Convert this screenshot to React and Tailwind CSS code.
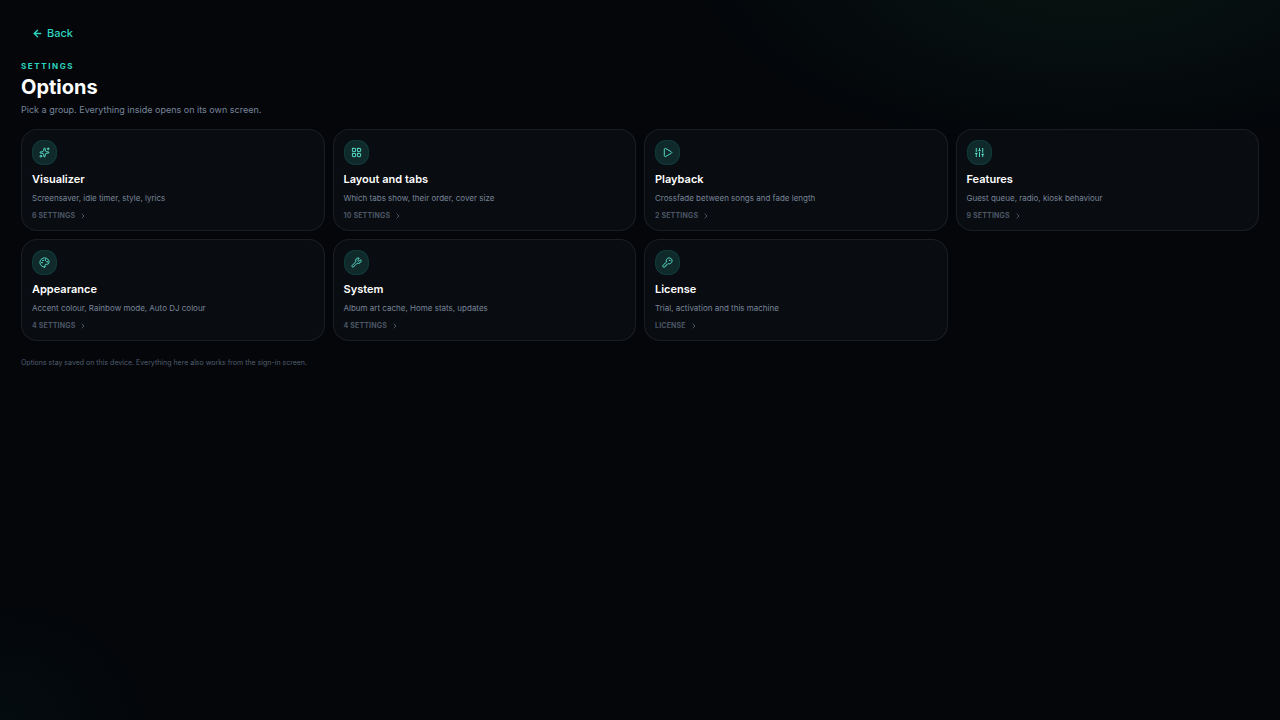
import React from "react";
import {
  ArrowLeft,
  ChevronRight,
  KeyRound,
  LayoutGrid,
  Palette,
  Play,
  SlidersVertical,
  Sparkles,
  Wrench,
} from "lucide-react";

const groups = [
  { title: "Visualizer", text: "Screensaver, idle timer, style, lyrics", count: "6 settings", icon: Sparkles },
  { title: "Layout and tabs", text: "Which tabs show, their order, cover size", count: "10 settings", icon: LayoutGrid },
  { title: "Playback", text: "Crossfade between songs and fade length", count: "2 settings", icon: Play },
  { title: "Features", text: "Guest queue, radio, kiosk behaviour", count: "9 settings", icon: SlidersVertical },
  { title: "Appearance", text: "Accent colour, Rainbow mode, Auto DJ colour", count: "4 settings", icon: Palette },
  { title: "System", text: "Album art cache, Home stats, updates", count: "4 settings", icon: Wrench },
  { title: "License", text: "Trial, activation and this machine", count: "License", icon: KeyRound },
];

const GroupCard = ({ title, text, count, icon: Icon }) => (
  <button
    type="button"
    className="flex flex-col items-start rounded-2xl border border-white/7 bg-[#090c10] px-[10px] pt-[10px] pb-[9px] text-left hover:border-teal-400/30"
  >
    <span className="flex size-[25px] items-center justify-center rounded-[11px] border border-teal-400/10 bg-[#10292b] text-[#5eead4]">
      <Icon size={11} strokeWidth={2} />
    </span>
    <span className="mt-[6px] text-[11px] leading-4 font-semibold text-white">{title}</span>
    <span className="mt-[5px] text-[8px] leading-3 text-[#78859a]">{text}</span>
    <span className="mt-[7px] flex items-center gap-1 text-[7px] leading-[10px] font-bold tracking-wide text-[#4b5666] uppercase">
      {count}
      <ChevronRight size={8} strokeWidth={3} />
    </span>
  </button>
);

const App = () => {
  return (
    <div className="min-h-screen bg-[#04060a] bg-[radial-gradient(ellipse_400px_190px_at_85%_-5%,#071512,transparent),radial-gradient(ellipse_150px_120px_at_0%_100%,#040c0f,transparent)] px-[21px] pt-[21px] font-['Inter','Liberation_Sans',sans-serif]">
      <button type="button" className="ml-[11px] flex items-center gap-1 text-[11px] leading-6 font-medium text-[#2dd4bf]">
        <ArrowLeft size={11} strokeWidth={3} />
        Back
      </button>

      <header className="mt-[15px]">
        <p className="text-[8px] leading-[12px] font-bold tracking-[0.2em] text-[#2dd4bf] uppercase">Settings</p>
        <h1 className="mt-[3px] text-[20px] leading-6 font-bold text-white">Options</h1>
        <p className="mt-[3px] text-[9px] leading-4 text-[#78859a]">
          Pick a group. Everything inside opens on its own screen.
        </p>
      </header>

      <main className="mt-[11px] grid grid-cols-4 gap-2">
        {groups.map((group) => (
          <GroupCard key={group.title} {...group} />
        ))}
      </main>

      <p className="mt-[17px] text-[7px] leading-[10px] text-[#525e6e]">
        Options stay saved on this device. Everything here also works from the sign-in screen.
      </p>
    </div>
  );
};

export default App;
